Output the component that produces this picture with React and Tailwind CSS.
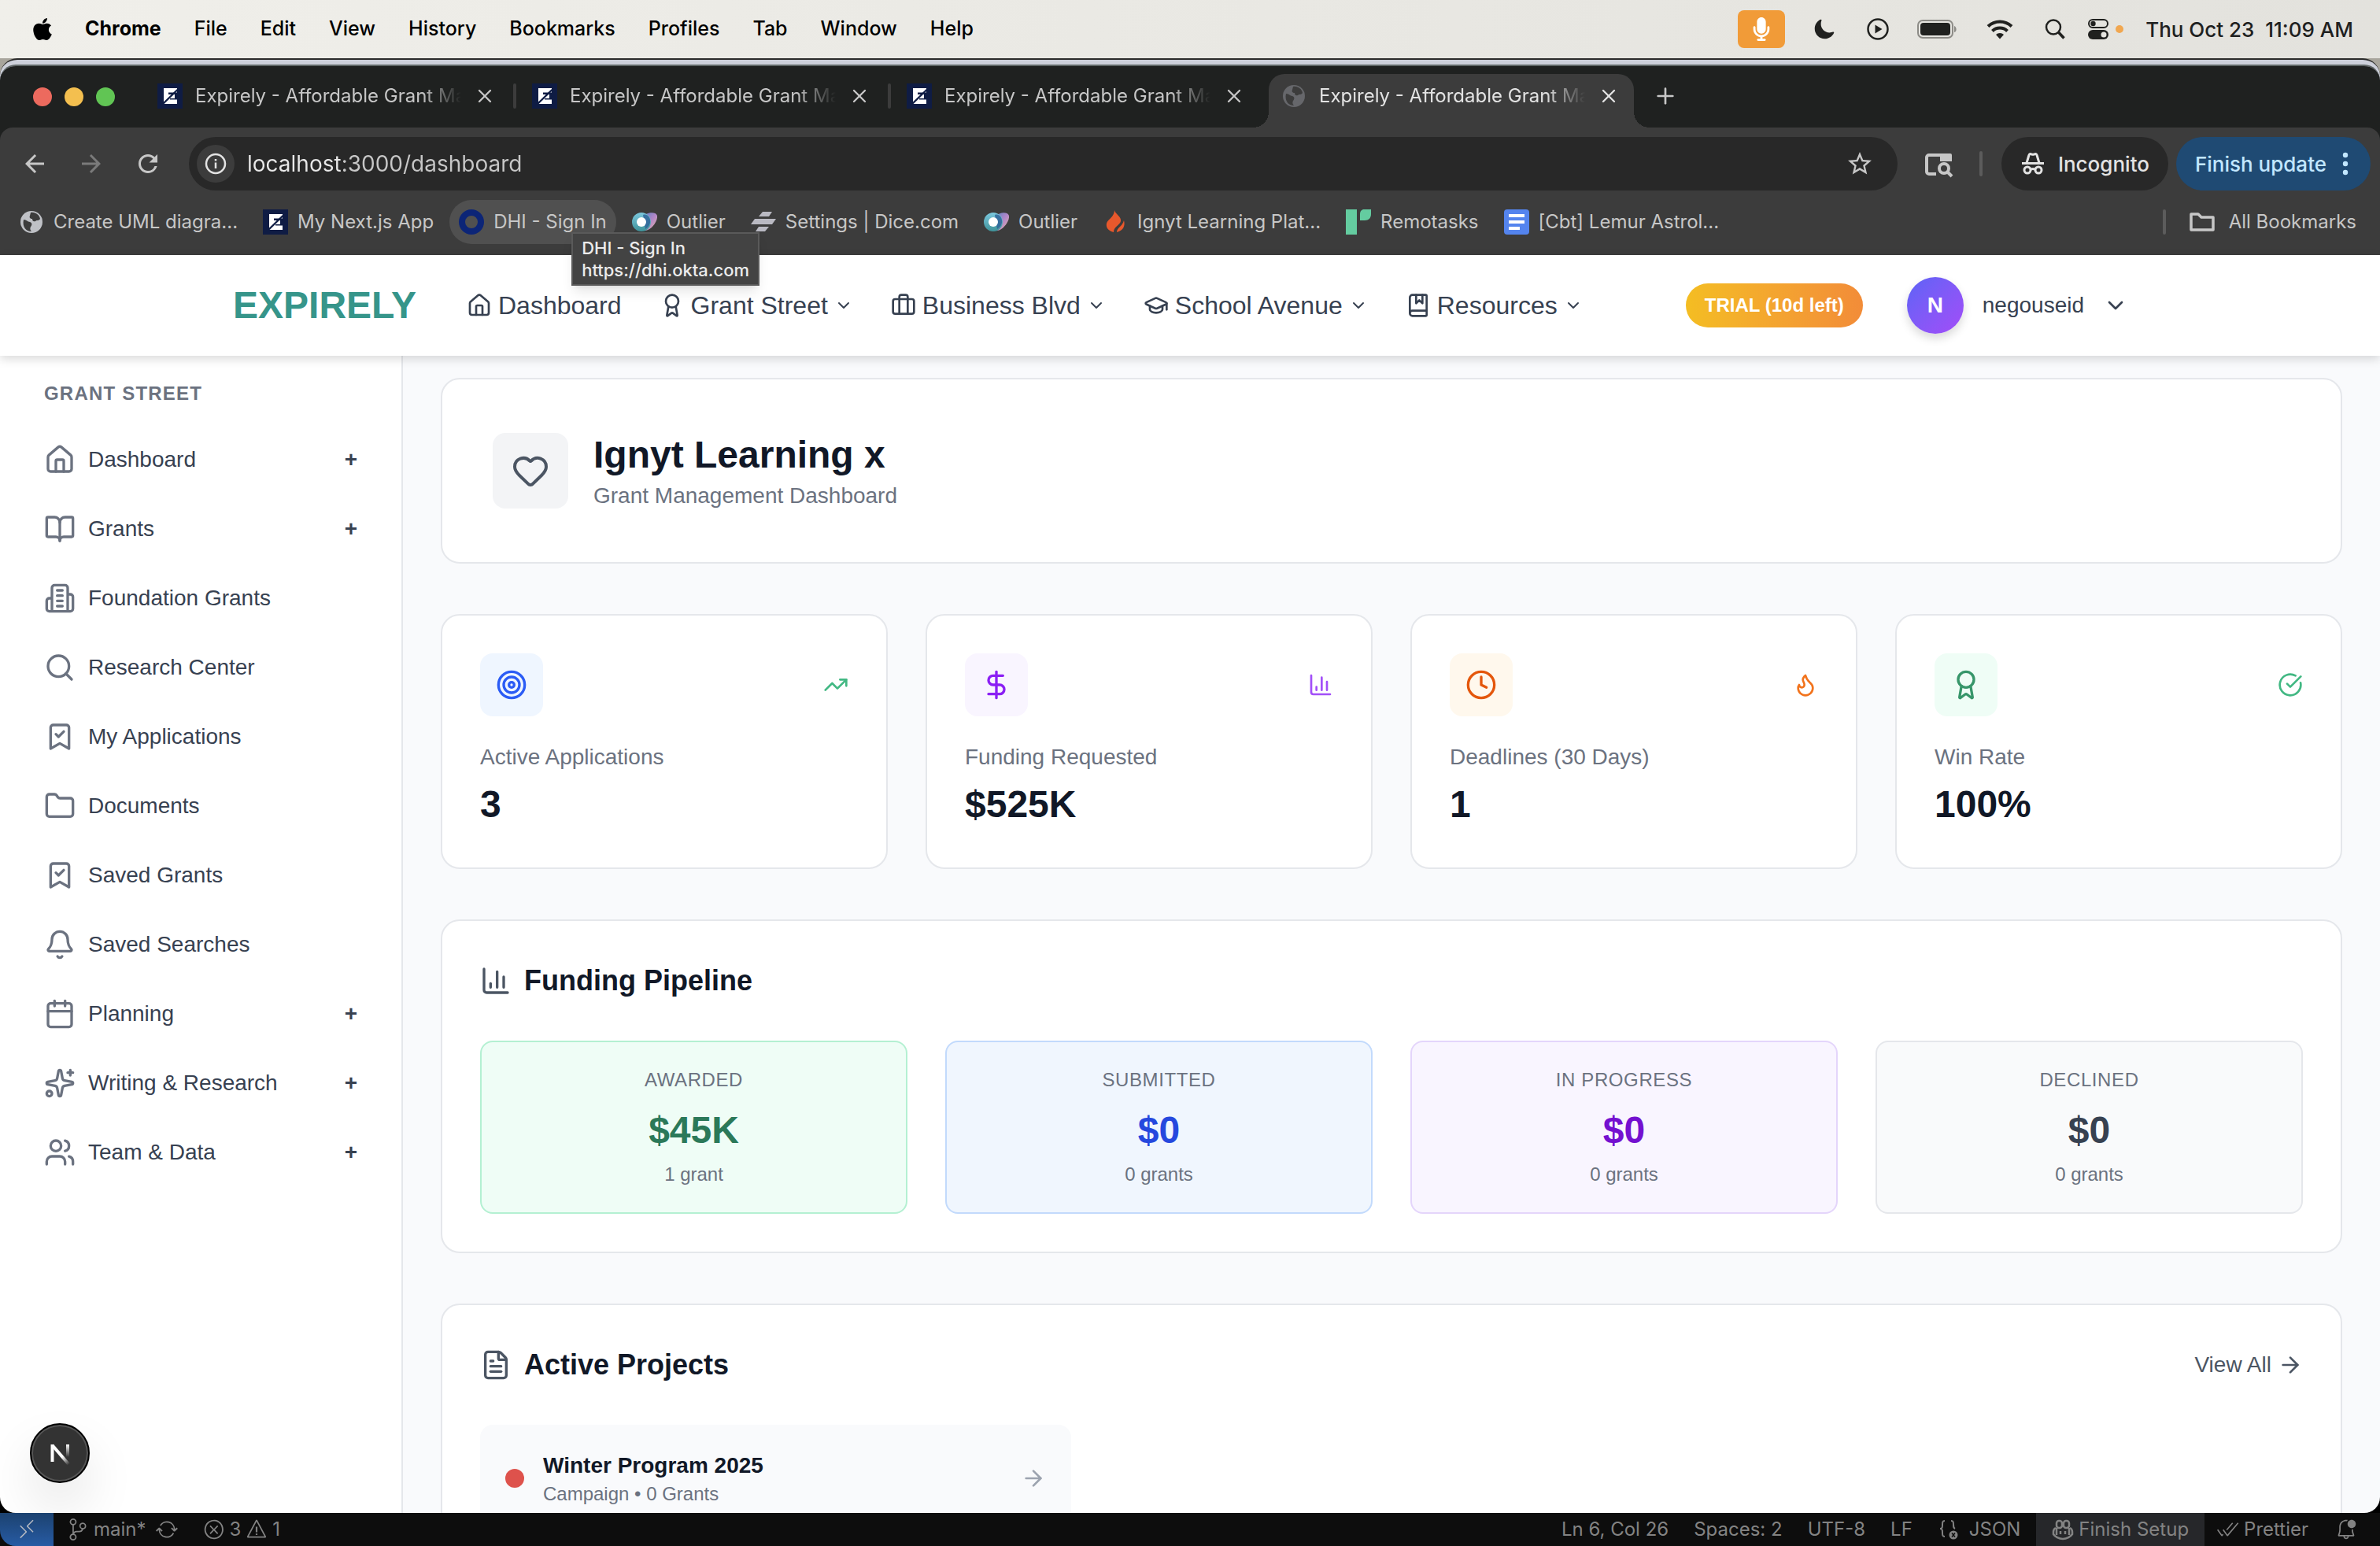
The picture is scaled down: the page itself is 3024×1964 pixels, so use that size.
import React from "react";
import {
  House, Award, Briefcase, GraduationCap, BookMarked, ChevronDown, BookOpen, Search,
  Folder, Bell, Calendar, Users, Heart, Target, TrendingUp, DollarSign, Clock, Flame,
  FileText, ArrowRight, X, Plus,
} from "lucide-react";
import { FaApple, FaMicrophone } from "react-icons/fa6";
import { IoMoon } from "react-icons/io5";
import { MdArrowBack, MdArrowForward, MdRefresh, MdStarBorder } from "react-icons/md";
import {
  VscSourceControl, VscSync, VscError, VscWarning, VscCheckAll, VscBellDot, VscRemote,
} from "react-icons/vsc";

const ui = "font-['Inter',sans-serif]";

/* ---------- drawings ---------- */

function Stroke({ children, className }) {
  return (
    <svg viewBox="0 0 24 24" fill="none" stroke="currentColor" strokeWidth="2" strokeLinecap="round" strokeLinejoin="round" className={className} aria-hidden="true">
      {children}
    </svg>
  );
}

const ChartIcon = ({ className }) => (
  <Stroke className={className}>
    <path d="M3 3v16a2 2 0 0 0 2 2h16M8 17v-3M13 17V5M18 17V9" />
  </Stroke>
);

const BuildingIcon = ({ className }) => (
  <Stroke className={className}>
    <path d="M6 22V4a2 2 0 0 1 2-2h8a2 2 0 0 1 2 2v18ZM6 12H4a2 2 0 0 0-2 2v6a2 2 0 0 0 2 2h2M18 9h2a2 2 0 0 1 2 2v9a2 2 0 0 1-2 2h-2M10 6h4M10 10h4M10 14h4M10 18h4" />
  </Stroke>
);

const BookmarkCheckIcon = ({ className }) => (
  <Stroke className={className}>
    <path d="m19 21-7-4-7 4V5a2 2 0 0 1 2-2h10a2 2 0 0 1 2 2ZM9 10l2 2 4-4" />
  </Stroke>
);

const SparkIcon = ({ className }) => (
  <Stroke className={className}>
    <path d="M11.017 2.814a1 1 0 0 1 1.966 0l1.051 5.558a2 2 0 0 0 1.594 1.594l5.558 1.051a1 1 0 0 1 0 1.966l-5.558 1.051a2 2 0 0 0-1.594 1.594l-1.051 5.558a1 1 0 0 1-1.966 0l-1.051-5.558a2 2 0 0 0-1.594-1.594l-5.558-1.051a1 1 0 0 1 0-1.966l5.558-1.051a2 2 0 0 0 1.594-1.594zM20 2v4M22 4h-4" />
    <circle cx="4" cy="20" r="2" />
  </Stroke>
);

const CircleCheckIcon = ({ className }) => (
  <Stroke className={className}>
    <path d="M21.801 10A10 10 0 1 1 17 3.335M9 11l3 3L22 4" />
  </Stroke>
);

const ExpirelyMark = () => (
  <svg viewBox="0 0 32 32" className="size-8 shrink-0" aria-hidden="true">
    <rect width="32" height="32" fill="#0f1c44" />
    <path d="M8 6h17v5.500H14v2.500h8v5h-6v1.500h9V26H8z" fill="#fff" />
    <path d="M7.500 25.500 25.500 8" stroke="#0f1c44" strokeWidth="2.400" />
  </svg>
);

const GlobeMark = ({ className }) => (
  <svg viewBox="0 0 32 32" className={className} aria-hidden="true">
    <circle cx="16" cy="16" r="14" fill="currentColor" />
    <path d="M6 13c4 0 5 3 8 3 3 1 3 4 1 6-1 2-1 4 1 6-7 0-12-6-10-15zM15 4c6-1 11 3 12 8-2 3-4 1-6 3-3 1-4-1-4-3-3 0-4-2-3-4z" fill="#3c3c3c" />
  </svg>
);

const OutlierMark = () => (
  <svg viewBox="0 0 32 32" className="size-8 shrink-0" aria-hidden="true">
    <defs>
      <linearGradient id="olA" x1="0" y1="0" x2="0" y2="1">
        <stop offset="0" stopColor="#7cc8de" />
        <stop offset="1" stopColor="#3f9299" />
      </linearGradient>
      <linearGradient id="olB" x1="0" y1="0" x2="1" y2="1">
        <stop offset="0" stopColor="#5d83c4" />
        <stop offset=".5" stopColor="#b287c9" />
        <stop offset="1" stopColor="#e6b6a6" />
      </linearGradient>
    </defs>
    <path d="M14 9c4-5 16-7 18-1 1 7-7 18-15 19z" fill="url(#olB)" />
    <circle cx="12" cy="16" r="12" fill="url(#olA)" />
    <path d="M14 7c5-2 10 3 9 10-1 4-3 6-6 8z" fill="#2c5f97" opacity=".8" />
    <circle cx="12" cy="16" r="6" fill="#fff" />
  </svg>
);

const DiceMark = () => (
  <svg viewBox="0 0 32 32" className="size-8 shrink-0" fill="#b9b9c2" aria-hidden="true">
    <path d="M15 3h12l-4 6H10zM5 12h27l-5 7H0zM10 22h13l-5 6H6z" />
  </svg>
);

const FlameMark = () => (
  <svg viewBox="0 0 32 32" className="size-8 shrink-0" fill="#e8582c" aria-hidden="true">
    <path d="M15 1c1 5 9 8 8 14-1 5-9 7-9 14C7 27 4 23 5 18c1-4 4-5 7-9 2-3 3-5 3-8z" />
    <path d="M27 14c2 7-1 13-9 15 0-6 7-7 9-15z" />
  </svg>
);

const RemotasksMark = () => (
  <svg viewBox="0 0 32 32" className="size-8 shrink-0" fill="#64cca0" aria-hidden="true">
    <path d="M0 0h14v32H0zM22 0h10v6c0 5-3 8-8 8h-6V6c0-3 1-5 4-6z" />
  </svg>
);

const DocsMark = () => (
  <svg viewBox="0 0 32 32" className="size-8 shrink-0" aria-hidden="true">
    <rect width="32" height="32" rx="4" fill="#5484ee" />
    <path d="M6 8h20M6 16h20M6 24h14" stroke="#fff" strokeWidth="4" />
  </svg>
);

const IncognitoIcon = () => (
  <svg viewBox="0 0 32 32" className="size-8 shrink-0" fill="none" stroke="currentColor" strokeWidth="3" aria-hidden="true">
    <path d="M2 15.500h28" />
    <path d="M8 15l3-10c.4-1.500 1.600-1.800 3-1.200 1.400.6 2.600.6 4 0 1.400-.6 2.600-.3 3 1.200l3 10" />
    <circle cx="9" cy="24" r="4" />
    <circle cx="23" cy="24" r="4" />
    <path d="M13 23.500c2-1.200 4-1.200 6 0" />
  </svg>
);

const LensIcon = () => (
  <svg viewBox="0 0 40 40" className="size-10 shrink-0 text-[#c7c7c7]" fill="none" stroke="currentColor" strokeWidth="4" aria-hidden="true">
    <path d="M17 33H8a3 3 0 0 1-3-3V12a3 3 0 0 1 3-3h27" />
    <path d="M22 7h13a2 2 0 0 1 2 2v8H22z" fill="currentColor" stroke="none" />
    <circle cx="27" cy="26" r="6" />
    <path d="m31 30 6 6" />
  </svg>
);

const FolderOutline = () => (
  <svg viewBox="0 0 36 32" className="h-8 w-9 shrink-0" fill="none" stroke="currentColor" strokeWidth="3.500" strokeLinejoin="round" aria-hidden="true">
    <path d="M4 6h9l4 4h15v16H4z" />
  </svg>
);

const BatteryIcon = () => (
  <svg viewBox="0 0 52 24" className="h-6 w-[52px]" aria-hidden="true">
    <rect x="1" y="1" width="44" height="22" rx="6" fill="none" stroke="#8d8c87" strokeWidth="2" />
    <rect x="4" y="4" width="38" height="16" rx="4" fill="#20211f" />
    <path d="M47 8c3 1 4 7 0 8z" fill="#8d8c87" />
  </svg>
);

const WifiIcon = () => (
  <svg viewBox="0 0 34 26" className="h-[26px] w-[34px]" fill="none" stroke="#20211f" strokeWidth="4" aria-hidden="true">
    <path d="M2 9.500a21.500 21.500 0 0 1 30 0" />
    <path d="M7.500 15.500a13.500 13.500 0 0 1 19 0" />
    <path d="M17 25.500l-5-5.500a7 7 0 0 1 10 0z" fill="#20211f" stroke="none" />
  </svg>
);

const ControlCenterIcon = () => (
  <svg viewBox="0 0 28 28" className="size-7" aria-hidden="true">
    <rect x="2" y="2" width="24" height="10" rx="5" fill="none" stroke="#20211f" strokeWidth="2" />
    <circle cx="7.500" cy="7" r="3.200" fill="#20211f" />
    <rect x="1" y="15" width="26" height="12" rx="6" fill="#20211f" />
    <circle cx="21" cy="21" r="3.500" fill="#e5e4df" />
  </svg>
);

const PlayCircle = () => (
  <svg viewBox="0 0 28 28" className="size-7" aria-hidden="true">
    <circle cx="14" cy="14" r="12.500" fill="none" stroke="#20211f" strokeWidth="2.500" />
    <path d="M10.500 8.500v11l9-5.500z" fill="#20211f" />
  </svg>
);

const MagnifierIcon = () => (
  <svg viewBox="0 0 26 26" className="size-[26px]" fill="none" stroke="#20211f" aria-hidden="true">
    <circle cx="11" cy="10.500" r="9" strokeWidth="2.500" />
    <path d="m17.500 17 7 7.500" strokeWidth="3.500" />
  </svg>
);

const NextMark = () => (
  <svg viewBox="0 0 32 32" className="size-8" fill="none" strokeWidth="3" aria-hidden="true">
    <defs>
      <linearGradient id="nxD" x1="8" y1="5" x2="28" y2="30" gradientUnits="userSpaceOnUse">
        <stop offset=".6" stopColor="#fff" />
        <stop offset="1" stopColor="#fff" stopOpacity="0" />
      </linearGradient>
      <linearGradient id="nxV" x1="0" y1="5" x2="0" y2="21" gradientUnits="userSpaceOnUse">
        <stop offset="0" stopColor="#fff" />
        <stop offset="1" stopColor="#fff" stopOpacity="0" />
      </linearGradient>
    </defs>
    <path d="M6.500 27V5" stroke="#fff" strokeWidth="4" />
    <path d="M6.500 6 28 31" stroke="url(#nxD)" strokeWidth="4" />
    <path d="M26 5v16" stroke="url(#nxV)" strokeWidth="4" />
  </svg>
);

const BracesIcon = () => (
  <svg viewBox="0 0 28 28" className="size-7" fill="none" stroke="currentColor" strokeWidth="2" aria-hidden="true">
    <path d="M9 3C6 3 6 5 6 8s0 5-3 5c3 0 3 2 3 5s0 5 3 5M17 3c3 0 3 2 3 5s0 4 2 5" />
    <circle cx="20" cy="21" r="5.500" fill="currentColor" stroke="none" />
    <path d="m18 18.500 4 5M22 18.500l-4 5" stroke="#0d0d0d" strokeWidth="1.500" />
  </svg>
);

const CopilotIcon = () => (
  <svg viewBox="0 0 28 28" className="size-7" fill="none" stroke="currentColor" strokeWidth="2.500" aria-hidden="true">
    <rect x="6" y="3" width="7" height="9" rx="3" />
    <rect x="15" y="3" width="7" height="9" rx="3" />
    <path d="M5 12c-2 1-3 3-3 5v3c2 3 7 6 12 6s10-3 12-6v-3c0-2-1-4-3-5" />
    <path d="M6 12v9M22 12v9M11 16v4M17 16v4" />
  </svg>
);

/* ---------- macOS menu bar ---------- */

function MenuBar() {
  const items = ["File", "Edit", "View", "History", "Bookmarks", "Profiles", "Tab", "Window", "Help"];
  return (
    <div className={`${ui} flex h-[74px] shrink-0 items-center justify-between bg-linear-to-r from-[#f0efea] to-[#e3e2dd] pr-[34px] pl-[38px] text-[25px] font-medium text-black`}>
      <div className="flex items-center gap-[42px]">
        <FaApple className="size-[32px]" aria-label="Apple" />
        <button className="-ml-1 font-bold">Chrome</button>
        {items.map((t) => (
          <button key={t}>{t}</button>
        ))}
      </div>
      <div className="flex items-center gap-9 text-[#20211f]">
        <span className="flex h-12 w-[60px] items-center justify-center rounded-lg bg-[#f19b38] text-white">
          <FaMicrophone className="size-[30px]" />
        </span>
        <IoMoon className="size-7" />
        <span className="ml-1"><PlayCircle /></span>
        <BatteryIcon />
        <WifiIcon />
        <span className="ml-1"><MagnifierIcon /></span>
        <span className="-ml-2 flex items-center gap-2">
          <ControlCenterIcon />
          <span className="size-[10px] rounded-full bg-[#f1a750]" />
        </span>
        <span className="-ml-2 text-[26px] whitespace-pre">Thu Oct 23  11:09 AM</span>
      </div>
    </div>
  );
}

/* ---------- Browser chrome ---------- */

function BrowserTab({ active, last, separator }) {
  return (
    <>
      <div className={active ? "relative flex h-[68px] w-[464px] items-center rounded-t-[20px] bg-[#3c3c3c] pr-[18px] pb-3 pl-4 text-[#e3e3e3]" : "flex h-[68px] w-[464px] items-center pr-[18px] pb-3 pl-4 text-[#c7c7c7]"}>
        {active && (
          <>
            <span className="absolute bottom-0 -left-5 size-5 bg-[radial-gradient(circle_at_0_0,transparent_20px,#3c3c3c_20px)]" />
            <span className="absolute -right-5 bottom-0 size-5 bg-[radial-gradient(circle_at_100%_0,transparent_20px,#3c3c3c_20px)]" />
          </>
        )}
        {active ? <GlobeMark className="size-8 shrink-0 text-[#66676b]" /> : <ExpirelyMark />}
        <span className="ml-4 flex-1 overflow-hidden mask-r-from-85% mask-r-to-100% text-2xl whitespace-nowrap">
          Expirely - Affordable Grant Management
        </span>
        <button aria-label="Close tab" className="ml-4">
          <X className="size-7" />
        </button>
      </div>
      {!last && (
        <div className="flex h-[68px] w-3 items-center justify-center pb-3">
          {separator && <span className="h-8 w-1 rounded-full bg-[#3c3c3c]" />}
        </div>
      )}
    </>
  );
}

const bookmarks = [
  { icon: <GlobeMark className="size-8 shrink-0 text-[#bfc1c6]" />, label: "Create UML diagra..." },
  { icon: <ExpirelyMark />, label: "My Next.js App" },
  { icon: <span className="size-8 shrink-0 rounded-full border-8 border-[#0c2577]" />, label: "DHI - Sign In", tip: true },
  { icon: <OutlierMark />, label: "Outlier" },
  { icon: <DiceMark />, label: "Settings | Dice.com" },
  { icon: <OutlierMark />, label: "Outlier" },
  { icon: <FlameMark />, label: "Ignyt Learning Plat..." },
  { icon: <RemotasksMark />, label: "Remotasks" },
  { icon: <DocsMark />, label: "[Cbt] Lemur Astrol..." },
];

function BrowserChrome() {
  return (
    <div className={`${ui} shrink-0 bg-[#1f2120]`}>
      <div className="flex h-[78px] items-end pl-[42px]">
        <div className="mr-[38px] flex gap-4 self-center">
          <span className="size-6 rounded-full bg-[#ec6a5e]" />
          <span className="size-6 rounded-full bg-[#f4bf4f]" />
          <span className="size-6 rounded-full bg-[#61c554]" />
        </div>
        <BrowserTab separator />
        <BrowserTab separator />
        <BrowserTab />
        <BrowserTab active last />
        <button aria-label="New tab" className="mb-6 ml-6 text-[#c7c7c7]">
          <Plus className="size-8" />
        </button>
      </div>

      <div className="rounded-t-[16px] bg-[#3c3c3c] pt-3 pb-[14px]">
        <div className="flex h-[68px] items-center pr-3 pl-[26px] text-[#c7c7c7]">
          <div className="mr-[34px] flex items-center gap-9">
            <button aria-label="Back"><MdArrowBack className="size-9" /></button>
            <button aria-label="Forward" className="text-[#7a7a7a]"><MdArrowForward className="size-9" /></button>
            <button aria-label="Reload"><MdRefresh className="size-9" /></button>
          </div>
          <div className="flex h-full flex-1 items-center rounded-full bg-[#282828] pr-[30px] pl-[10px]">
            <button aria-label="View site information" className="flex size-12 items-center justify-center rounded-full bg-[#3c3c3c] text-[#e3e3e3]">
              <svg viewBox="0 0 28 28" className="size-7" fill="none" stroke="currentColor" aria-hidden="true">
                <circle cx="14" cy="14" r="12" strokeWidth="2.500" />
                <path d="M14 12.500V20M14 8v2.500" strokeWidth="2.500" />
              </svg>
            </button>
            <input
              aria-label="Address"
              defaultValue="localhost:3000/dashboard"
              className="ml-4 flex-1 bg-linear-to-r from-[#e8e8e8] from-[120px] to-[#c7c7c7] to-[120px] bg-clip-text text-[28px] text-transparent outline-none"
            />
            <button aria-label="Bookmark this tab"><MdStarBorder className="size-9" /></button>
          </div>
          <button aria-label="Search side panel" className="ml-8"><LensIcon /></button>
          <span className="ml-8 h-8 w-1 rounded-full bg-[#5c5c5c]" />
          <button className="ml-6 flex h-full items-center gap-4 rounded-full bg-[#282828] px-6 text-[26px] font-medium text-[#e3e3e3]">
            <IncognitoIcon />
            Incognito
          </button>
          <button className="ml-[10px] flex h-full items-center gap-5 rounded-full bg-[#1f4a73] pr-7 pl-6 text-[26px] font-medium text-[#c2e7ff]">
            Finish update
            <svg viewBox="0 0 8 32" className="h-8 w-2" fill="currentColor" aria-hidden="true">
              <circle cx="4" cy="5" r="3.200" /><circle cx="4" cy="16" r="3.200" /><circle cx="4" cy="27" r="3.200" />
            </svg>
          </button>
        </div>

        <div className="mt-3 flex h-14 items-center justify-between pr-[18px] pl-3 text-2xl text-[#c7c7c7]">
          <div className="flex h-full gap-2">
            {bookmarks.map((b, i) => (
              <div key={i} className="relative">
                <a href="#" className={b.tip ? "flex h-14 items-center gap-3 rounded-full bg-[#505050] px-3 whitespace-nowrap" : "flex h-14 items-center gap-3 rounded-full px-3 whitespace-nowrap"}>
                  {b.icon}
                  {b.label}
                </a>
                {b.tip && (
                  <div role="tooltip" className="absolute top-[41px] left-[155px] z-30 border-2 border-[#5a5a5a] bg-[#434343] px-[11px] py-1 text-[22px] leading-7 font-medium text-[#ececec] shadow-lg">
                    <div className="whitespace-nowrap">DHI - Sign In</div>
                    <div>https://dhi.okta.com</div>
                  </div>
                )}
              </div>
            ))}
          </div>
          <div className="flex items-center">
            <span className="h-8 w-1 rounded-full bg-[#5c5c5c]" />
            <a href="#" className="flex items-center gap-4 pr-3 pl-7">
              <FolderOutline />
              All Bookmarks
            </a>
          </div>
        </div>
      </div>
    </div>
  );
}

/* ---------- Application ---------- */

const navItems = [
  { icon: House, label: "Dashboard" },
  { icon: Award, label: "Grant Street", menu: true },
  { icon: Briefcase, label: "Business Blvd", menu: true },
  { icon: GraduationCap, label: "School Avenue", menu: true },
  { icon: BookMarked, label: "Resources", menu: true },
];

function Header() {
  return (
    <header className="relative z-10 h-32 shrink-0 bg-white shadow-[0_4px_12px_rgba(0,0,0,0.15)]">
      <div className="mx-auto flex h-full max-w-[2432px] items-center pr-6 text-[#374151]">
        <a href="#" className="mr-16 text-5xl font-bold text-[#36958a]">EXPIRELY</a>
        <nav className="flex items-center gap-12">
          {navItems.map(({ icon: Icon, label, menu }) => (
            <button key={label} className="flex items-center gap-2 text-[32px] leading-12 whitespace-nowrap">
              <Icon className="size-8" />
              {label}
              {menu && <ChevronDown className="size-6" />}
            </button>
          ))}
        </nav>
        <button className="ml-auto h-14 rounded-full bg-linear-to-r from-[#f4bd22] to-[#f28c38] px-6 text-2xl font-bold whitespace-nowrap text-white">
          TRIAL (10d left)
        </button>
        <button className="ml-14 flex items-center gap-6 text-[28px]">
          <span className="flex size-[72px] items-center justify-center rounded-full bg-linear-to-br from-[#5b63f6] to-[#a24bf8] font-bold text-white shadow-[0_6px_12px_rgba(0,0,0,0.15)]">N</span>
          negouseid
          <ChevronDown className="size-8" />
        </button>
      </div>
    </header>
  );
}

const sideItems = [
  { icon: House, label: "Dashboard", more: true },
  { icon: BookOpen, label: "Grants", more: true },
  { icon: BuildingIcon, label: "Foundation Grants" },
  { icon: Search, label: "Research Center" },
  { icon: BookmarkCheckIcon, label: "My Applications" },
  { icon: Folder, label: "Documents" },
  { icon: BookmarkCheckIcon, label: "Saved Grants" },
  { icon: Bell, label: "Saved Searches" },
  { icon: Calendar, label: "Planning", more: true },
  { icon: SparkIcon, label: "Writing & Research", more: true },
  { icon: Users, label: "Team & Data", more: true },
];

function Sidebar() {
  return (
    <aside className="relative w-[512px] shrink-0 border-r-2 border-[#e5e7eb] bg-white px-14 pt-8">
      <h2 className="text-2xl leading-8 font-bold tracking-wider text-[#6b7280]">GRANT STREET</h2>
      <ul className="mt-6">
        {sideItems.map(({ icon: Icon, label, more }) => (
          <li key={label}>
            <button className="flex h-[88px] w-full items-center gap-4 text-[28px] text-[#374151]">
              <Icon className="size-10 text-[#6b7280]" />
              {label}
              {more && <span className="ml-auto text-[28px] font-bold">+</span>}
            </button>
          </li>
        ))}
      </ul>
      <button aria-label="Open Next.js Dev Tools" className="absolute bottom-[38px] left-[38px] flex size-[76px] items-center justify-center rounded-full border-2 border-black bg-[#333333] shadow-[inset_0_0_0_2px_#555,0_32px_64px_rgba(0,0,0,0.10)]">
        <NextMark />
      </button>
    </aside>
  );
}

const stats = [
  { icon: Target, side: TrendingUp, label: "Active Applications", value: "3", box: "bg-[#eff6ff] text-[#2b5cf5]", tone: "text-[#42b883]" },
  { icon: DollarSign, side: ChartIcon, label: "Funding Requested", value: "$525K", box: "bg-[#f9f5ff] text-[#8b1ff4]", tone: "text-[#a24ff8]" },
  { icon: Clock, side: Flame, label: "Deadlines (30 Days)", value: "1", box: "bg-[#fff8ed] text-[#e4570c]", tone: "text-[#f2731c]" },
  { icon: Award, side: CircleCheckIcon, label: "Win Rate", value: "100%", box: "bg-[#effdf6] text-[#37966a]", tone: "text-[#42b883]" },
];

const pipeline = [
  { label: "AWARDED", value: "$45K", note: "1 grant", box: "border-[#b4f0d2] bg-[#effdf6]", tone: "text-[#2b7959]" },
  { label: "SUBMITTED", value: "$0", note: "0 grants", box: "border-[#c2dafc] bg-[#f0f6fe]", tone: "text-[#2548de]" },
  { label: "IN PROGRESS", value: "$0", note: "0 grants", box: "border-[#e4d5fb] bg-[#f9f5ff]", tone: "text-[#7410d0]" },
  { label: "DECLINED", value: "$0", note: "0 grants", box: "border-[#e5e7eb] bg-[#f9fafb]", tone: "text-[#374151]" },
];

function Dashboard() {
  return (
    <main className="flex min-w-0 flex-1 flex-col gap-16 overflow-hidden bg-[#f9fafc] px-12 pt-7 text-[#111827]">
      <section className="flex shrink-0 items-center gap-8 rounded-3xl border-2 border-[#e5e7eb] bg-white p-16">
        <div className="flex size-24 items-center justify-center rounded-2xl bg-[#f3f4f6] text-[#4b5563]">
          <Heart className="size-12" />
        </div>
        <div>
          <h1 className="text-5xl leading-16 font-bold">Ignyt Learning x</h1>
          <p className="text-[28px] leading-10 text-[#6b7280]">Grant Management Dashboard</p>
        </div>
      </section>

      <section className="grid shrink-0 grid-cols-4 gap-12">
        {stats.map(({ icon: Icon, side: Side, label, value, box, tone }) => (
          <div key={label} className="rounded-3xl border-2 border-[#e5e7eb] bg-white p-12">
            <div className="mb-8 flex items-center justify-between">
              <div className={`flex size-20 items-center justify-center rounded-2xl ${box}`}>
                <Icon className="size-10" />
              </div>
              <Side className={`size-8 ${tone}`} />
            </div>
            <p className="mb-2 text-[28px] leading-10 text-[#6b7280]">{label}</p>
            <p className="text-5xl leading-16 font-bold">{value}</p>
          </div>
        ))}
      </section>

      <section className="shrink-0 rounded-3xl border-2 border-[#e5e7eb] bg-white p-12">
        <h2 className="flex items-center gap-4 text-4xl leading-14 font-bold">
          <ChartIcon className="size-10 text-[#4b5563]" />
          Funding Pipeline
        </h2>
        <div className="mt-12 grid grid-cols-4 gap-12">
          {pipeline.map(({ label, value, note, box, tone }) => (
            <div key={label} className={`rounded-2xl border-2 p-8 text-center text-2xl leading-8 text-[#6b7280] ${box}`}>
              <p className="mb-4 tracking-wide">{label}</p>
              <p className={`mb-2 text-5xl leading-16 font-bold ${tone}`}>{value}</p>
              <p>{note}</p>
            </div>
          ))}
        </div>
      </section>

      <section className="shrink-0 rounded-3xl border-2 border-[#e5e7eb] bg-white p-12">
        <div className="flex items-center justify-between">
          <h2 className="flex items-center gap-4 text-4xl leading-14 font-bold">
            <FileText className="size-10 text-[#4b5563]" />
            Active Projects
          </h2>
          <a href="#" className="flex items-center gap-2 text-[28px] text-[#4b5563]">
            View All
            <ArrowRight className="size-8" />
          </a>
        </div>
        <div className="mt-12 grid grid-cols-3 gap-8">
          <a href="#" className="flex items-center gap-6 rounded-2xl bg-[#f9fafc] p-8">
            <span className="size-6 rounded-full bg-[#de524c]" />
            <span className="flex-1">
              <span className="block text-[28px] leading-10 font-bold">Winter Program 2025</span>
              <span className="block text-2xl leading-8 text-[#6b7280]">Campaign • 0 Grants</span>
            </span>
            <ArrowRight className="size-8 text-[#9ca3af]" />
          </a>
        </div>
      </section>
    </main>
  );
}

/* ---------- Editor status bar ---------- */

function StatusBar() {
  return (
    <footer className={`${ui} flex h-[42px] shrink-0 items-center justify-between overflow-hidden bg-[#0d0d0d] text-2xl text-[#838383]`}>
      <div className="flex h-full items-center">
        <button aria-label="Open remote window" className="mr-[17px] flex h-full w-[68px] items-center justify-center rounded-bl-[20px] bg-linear-to-b from-[#1c4270] to-[#275ba4] text-[#b4b9c2]">
          <VscRemote className="size-7" />
        </button>
        <button className="flex items-center gap-[6px]"><VscSourceControl className="size-7" />main*</button>
        <button aria-label="Synchronize changes" className="ml-3"><VscSync className="size-7" /></button>
        <button className="ml-8 flex items-center gap-[6px]">
          <VscError className="size-7" />3<VscWarning className="size-7" /><span>1</span>
        </button>
      </div>
      <div className="flex h-full items-center">
        <div className="mr-5 flex items-center gap-8">
          <button>Ln 6, Col 26</button>
          <button>Spaces: 2</button>
          <button>UTF-8</button>
          <button>LF</button>
          <button className="flex items-center gap-3"><BracesIcon />JSON</button>
        </div>
        <button className="flex h-full items-center gap-[6px] bg-[#26272a] px-5"><CopilotIcon />Finish Setup</button>
        <button className="ml-4 flex items-center gap-[6px]"><VscCheckAll className="size-7" />Prettier</button>
        <button aria-label="Notifications" className="mr-[29px] ml-[34px]"><VscBellDot className="size-7" /></button>
      </div>
    </footer>
  );
}

export default function App() {
  return (
    <div className="flex h-screen flex-col overflow-hidden bg-black font-['Liberation_Sans',sans-serif]">
      <MenuBar />
      <div className="flex min-h-0 flex-1 flex-col bg-linear-to-b from-[#a8a59c] from-50% to-black to-50%">
        <div className="flex min-h-0 flex-1 flex-col rounded-t-[22px] rounded-b-[22px] border-t-2 border-[#2b2b2a] bg-linear-to-b from-[#cdd0da] from-50% to-black to-50% pt-[6px]">
          <div className="flex min-h-0 flex-1 flex-col overflow-hidden rounded-[20px] border-t-2 border-[#5f6665]">
            <BrowserChrome />
            <Header />
            <div className="flex min-h-0 flex-1">
              <Sidebar />
              <Dashboard />
            </div>
          </div>
        </div>
      </div>
      <StatusBar />
    </div>
  );
}
